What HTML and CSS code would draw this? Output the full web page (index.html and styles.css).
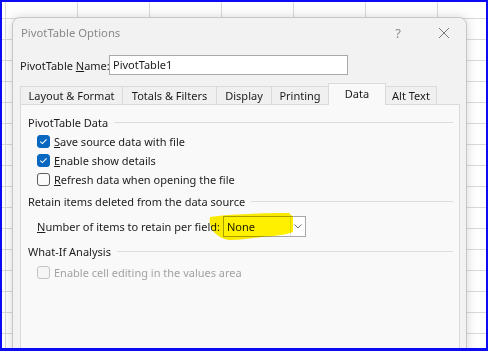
FILE: index.html
```html
<!DOCTYPE html>
<html lang="en">
<head>
<meta charset="utf-8">
<title>PivotTable Options</title>
<link rel="stylesheet" href="styles.css">
</head>
<body>
<div class="screen">
  <div class="dialog">
    <div class="titlebar">
      <span class="title">PivotTable Options</span>
      <span class="help">?</span>
      <svg class="close" width="12" height="12" viewBox="0 0 12 12"><path d="M1 1 L11 11 M11 1 L1 11" stroke="#7a7a7a" stroke-width="1" fill="none"/></svg>
    </div>
    <div class="name-row">
      <label class="name-label">PivotTable <u>N</u>ame:</label>
      <div class="textbox">PivotTable1</div>
    </div>
    <div class="tabs">
      <div class="tab tab-layout">Layout &amp; Format</div>
      <div class="tab tab-totals">Totals &amp; Filters</div>
      <div class="tab tab-display">Display</div>
      <div class="tab tab-printing">Printing</div>
      <div class="tab tab-data selected">Data</div>
      <div class="tab tab-alt">Alt Text</div>
    </div>
    <div class="panel">
      <div class="group-head">PivotTable Data</div>
      <div class="check-row">
        <span class="box checked"><svg width="13" height="13" viewBox="0 0 13 13"><path d="M3.3 6.6 L5.4 8.6 L9.6 4.3" stroke="#fff" stroke-width="1.1" fill="none"/></svg></span>
        <span><u>S</u>ave source data with file</span>
      </div>
      <div class="check-row">
        <span class="box checked"><svg width="13" height="13" viewBox="0 0 13 13"><path d="M3.3 6.6 L5.4 8.6 L9.6 4.3" stroke="#fff" stroke-width="1.1" fill="none"/></svg></span>
        <span><u>E</u>nable show details</span>
      </div>
      <div class="check-row">
        <span class="box"></span>
        <span><u>R</u>efresh data when opening the file</span>
      </div>
      <div class="group-head gap-a">Retain items deleted from the data source</div>
      <div class="combo-row">
        <span><u>N</u>umber of items to retain per field:</span>
        <div class="combo">
          <span class="combo-value">None</span>
          <span class="combo-btn"><svg width="8" height="5" viewBox="0 0 8 5"><path d="M0.5 0.5 L4 4 L7.5 0.5" stroke="#6a6a6a" stroke-width="1" fill="none"/></svg></span>
        </div>
      </div>
      <div class="group-head gap-b">What-If Analysis</div>
      <div class="check-row disabled">
        <span class="box"></span>
        <span>Enable cell editing in the values area</span>
      </div>
    </div>
  </div>
  <svg class="ink" width="488" height="351" viewBox="0 0 488 351">
    <path d="M210 217 C230 214 265 213 289 213 L293 217 L293 232 C285 235 275 236 262 237 C250 238 240 240 229 240 C222 239 216 235 212 230 C210 226 209 221 210 217 Z" fill="#fff000"/>
  </svg>
</div>
</body>
</html>
```
FILE: styles.css
```css
html, body {
  margin: 0;
  padding: 0;
}
body {
  font-family: "Noto Sans", "Open Sans", sans-serif;
  font-size: 11px;
  color: #1b1b1b;
}
.screen {
  position: relative;
  width: 488px;
  height: 351px;
  box-sizing: border-box;
  border: 2px solid #0b0bf5;
  border-bottom-width: 3px;
  overflow: hidden;
  padding: 15px 0 0 10px;
  background-color: #ffffff;
  background-image:
    linear-gradient(to right, #dadada 1px, transparent 1px),
    linear-gradient(to bottom, #dadada 1px, transparent 1px);
  background-size: 72px 21px;
  background-position: 3px 16px;
}
.dialog {
  width: 455px;
  height: 345px;
  box-sizing: border-box;
  border: 1px solid #c6c6c6;
  border-radius: 8px 8px 0 0;
  background: #f2f2f2;
  box-shadow: 0 0 12px rgba(0, 0, 0, 0.16);
}
.titlebar {
  height: 29px;
  display: flex;
  align-items: center;
  padding-left: 8px;
}
.title {
  color: #8a8a8a;
  flex: 1;
  font-size: 11.3px;
}
.help {
  color: #8d8d8d;
  font-size: 13px;
  margin-right: 37px;
}
.close {
  margin-right: 16px;
}
.name-row {
  display: flex;
  align-items: center;
  margin-top: 8px;
  padding-left: 7px;
  height: 20px;
}
.name-label {
  width: 89px;
  white-space: nowrap;
}
.textbox {
  width: 239px;
  height: 20px;
  box-sizing: border-box;
  border: 1px solid #a8a8a8;
  background: #fff;
  padding-left: 3px;
  line-height: 18px;
}
.tabs {
  display: flex;
  align-items: flex-end;
  margin-top: 8px;
  margin-left: 7px;
  height: 21px;
  position: relative;
  z-index: 1;
}
.tab {
  height: 18px;
  box-sizing: border-box;
  border: 1px solid #dadada;
  border-bottom: 0;
  background: #f0f0f0;
  margin-left: -1px;
  text-align: center;
  line-height: 18px;
  white-space: nowrap;
}
.tab:first-child {
  margin-left: 0;
}
.tab-layout { width: 103px; }
.tab-totals { width: 95px; }
.tab-display { width: 56px; }
.tab-printing { width: 58px; }
.tab-data { width: 58px; }
.tab-alt { width: 52px; }
.tab.selected {
  height: 22px;
  margin-bottom: -1px;
  background: #f9f9f9;
  line-height: 20px;
  position: relative;
  z-index: 2;
}
.panel {
  margin-left: 7px;
  width: 440px;
  height: 260px;
  box-sizing: border-box;
  border: 1px solid #dadada;
  background: #f9f9f9;
  padding: 8px 6px 0 7px;
}
.group-head {
  display: flex;
  align-items: center;
  height: 19px;
  white-space: nowrap;
}
.group-head::after {
  content: "";
  flex: 1;
  height: 1px;
  background: #dcdcdc;
  margin-left: 6px;
}
.gap-a { margin-top: 3px; }
.gap-b { margin-top: 5px; }
.check-row {
  display: flex;
  align-items: center;
  height: 19px;
  padding-left: 9px;
  white-space: nowrap;
}
.check-row .box {
  width: 13px;
  height: 13px;
  box-sizing: border-box;
  border: 1px solid #5c5c5c;
  border-radius: 3px;
  background: #fbfbfb;
  margin-right: 4px;
  display: flex;
}
.check-row .box.checked {
  background: #0867c0;
  border-color: #0867c0;
}
.check-row .box.checked svg {
  margin: -1px;
}
.check-row.disabled {
  color: #a2a2a2;
  margin-top: 2px;
}
.check-row.disabled .box {
  border-color: #c4c4c4;
  background: #f6f6f6;
}
.combo-row {
  display: flex;
  align-items: center;
  height: 21px;
  margin-top: 5px;
  padding-left: 9px;
  white-space: nowrap;
}
.combo {
  margin-left: 3px;
  width: 83px;
  height: 21px;
  box-sizing: border-box;
  border: 1px solid #a7a7a7;
  background: #fff;
  display: flex;
}
.combo-value {
  flex: 1;
  padding-left: 3px;
  line-height: 19px;
  border-right: 1px solid #e2e2e2;
}
.combo-btn {
  width: 14px;
  display: flex;
  align-items: center;
  justify-content: center;
}
.ink {
  position: absolute;
  left: -2px;
  top: -2px;
  pointer-events: none;
  mix-blend-mode: multiply;
}
```
